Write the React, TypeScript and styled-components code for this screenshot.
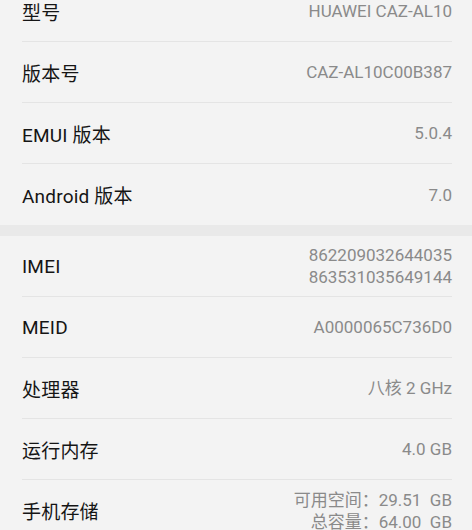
import React from 'react';
import styled, { createGlobalStyle } from 'styled-components';

interface InfoItem {
  label: string;
  values: string[];
}

const firstGroup: InfoItem[] = [
  { label: '型号', values: ['HUAWEI CAZ-AL10'] },
  { label: '版本号', values: ['CAZ-AL10C00B387'] },
  { label: 'EMUI 版本', values: ['5.0.4'] },
  { label: 'Android 版本', values: ['7.0'] },
];

const secondGroup: InfoItem[] = [
  { label: 'IMEI', values: ['862209032644035', '863531035649144'] },
  { label: 'MEID', values: ['A0000065C736D0'] },
  { label: '处理器', values: ['八核 2 GHz'] },
  { label: '运行内存', values: ['4.0 GB'] },
  { label: '手机存储', values: ['可用空间：29.51  GB', '总容量：64.00  GB'] },
];

const GlobalStyle = createGlobalStyle`
  html, body {
    margin: 0;
    padding: 0;
    background: #f3f3f3;
    overflow: hidden;
  }
  body {
    font-family: Roboto, "Noto Sans CJK SC", sans-serif;
    -webkit-font-smoothing: antialiased;
  }
`;

const Screen = styled.div`
  width: 472px;
  height: 530px;
  overflow: hidden;
  background: #f3f3f3;
`;

// 스크롤된 상태를 흉내내기 위해 위로 살짝 올림
const ScrollContent = styled.div`
  margin-top: -19px;
`;

const Group = styled.ul`
  margin: 0;
  padding: 0 20px 0 22px;
  list-style: none;
  background: #f3f3f3;
`;

const GroupGap = styled.div`
  height: 11px;
  background: #e9e9e9;
`;

const Row = styled.li<{ $last?: boolean }>`
  display: flex;
  align-items: center;
  justify-content: space-between;
  height: 61px;
  box-sizing: border-box;
  border-bottom: ${({ $last }) => ($last ? 'none' : '1px solid #e4e4e4')};
`;

const Label = styled.span`
  font-size: 19px;
  color: #151515;
  letter-spacing: 0.2px;
`;

const ValueStack = styled.div`
  display: flex;
  flex-direction: column;
  align-items: flex-end;
`;

const Value = styled.span`
  font-size: 17px;
  line-height: 22px;
  color: #8a8a8a;
  white-space: pre;
`;

const InfoGroup = ({ items }: { items: InfoItem[] }) => (
  <Group>
    {items.map((item, i) => (
      <Row key={item.label} $last={i === items.length - 1}>
        <Label>{item.label}</Label>
        <ValueStack>
          {item.values.map((v) => (
            <Value key={v}>{v}</Value>
          ))}
        </ValueStack>
      </Row>
    ))}
  </Group>
);

const App = () => (
  <Screen>
    <GlobalStyle />
    <ScrollContent>
      <InfoGroup items={firstGroup} />
      <GroupGap />
      <InfoGroup items={secondGroup} />
    </ScrollContent>
  </Screen>
);

export default App;
